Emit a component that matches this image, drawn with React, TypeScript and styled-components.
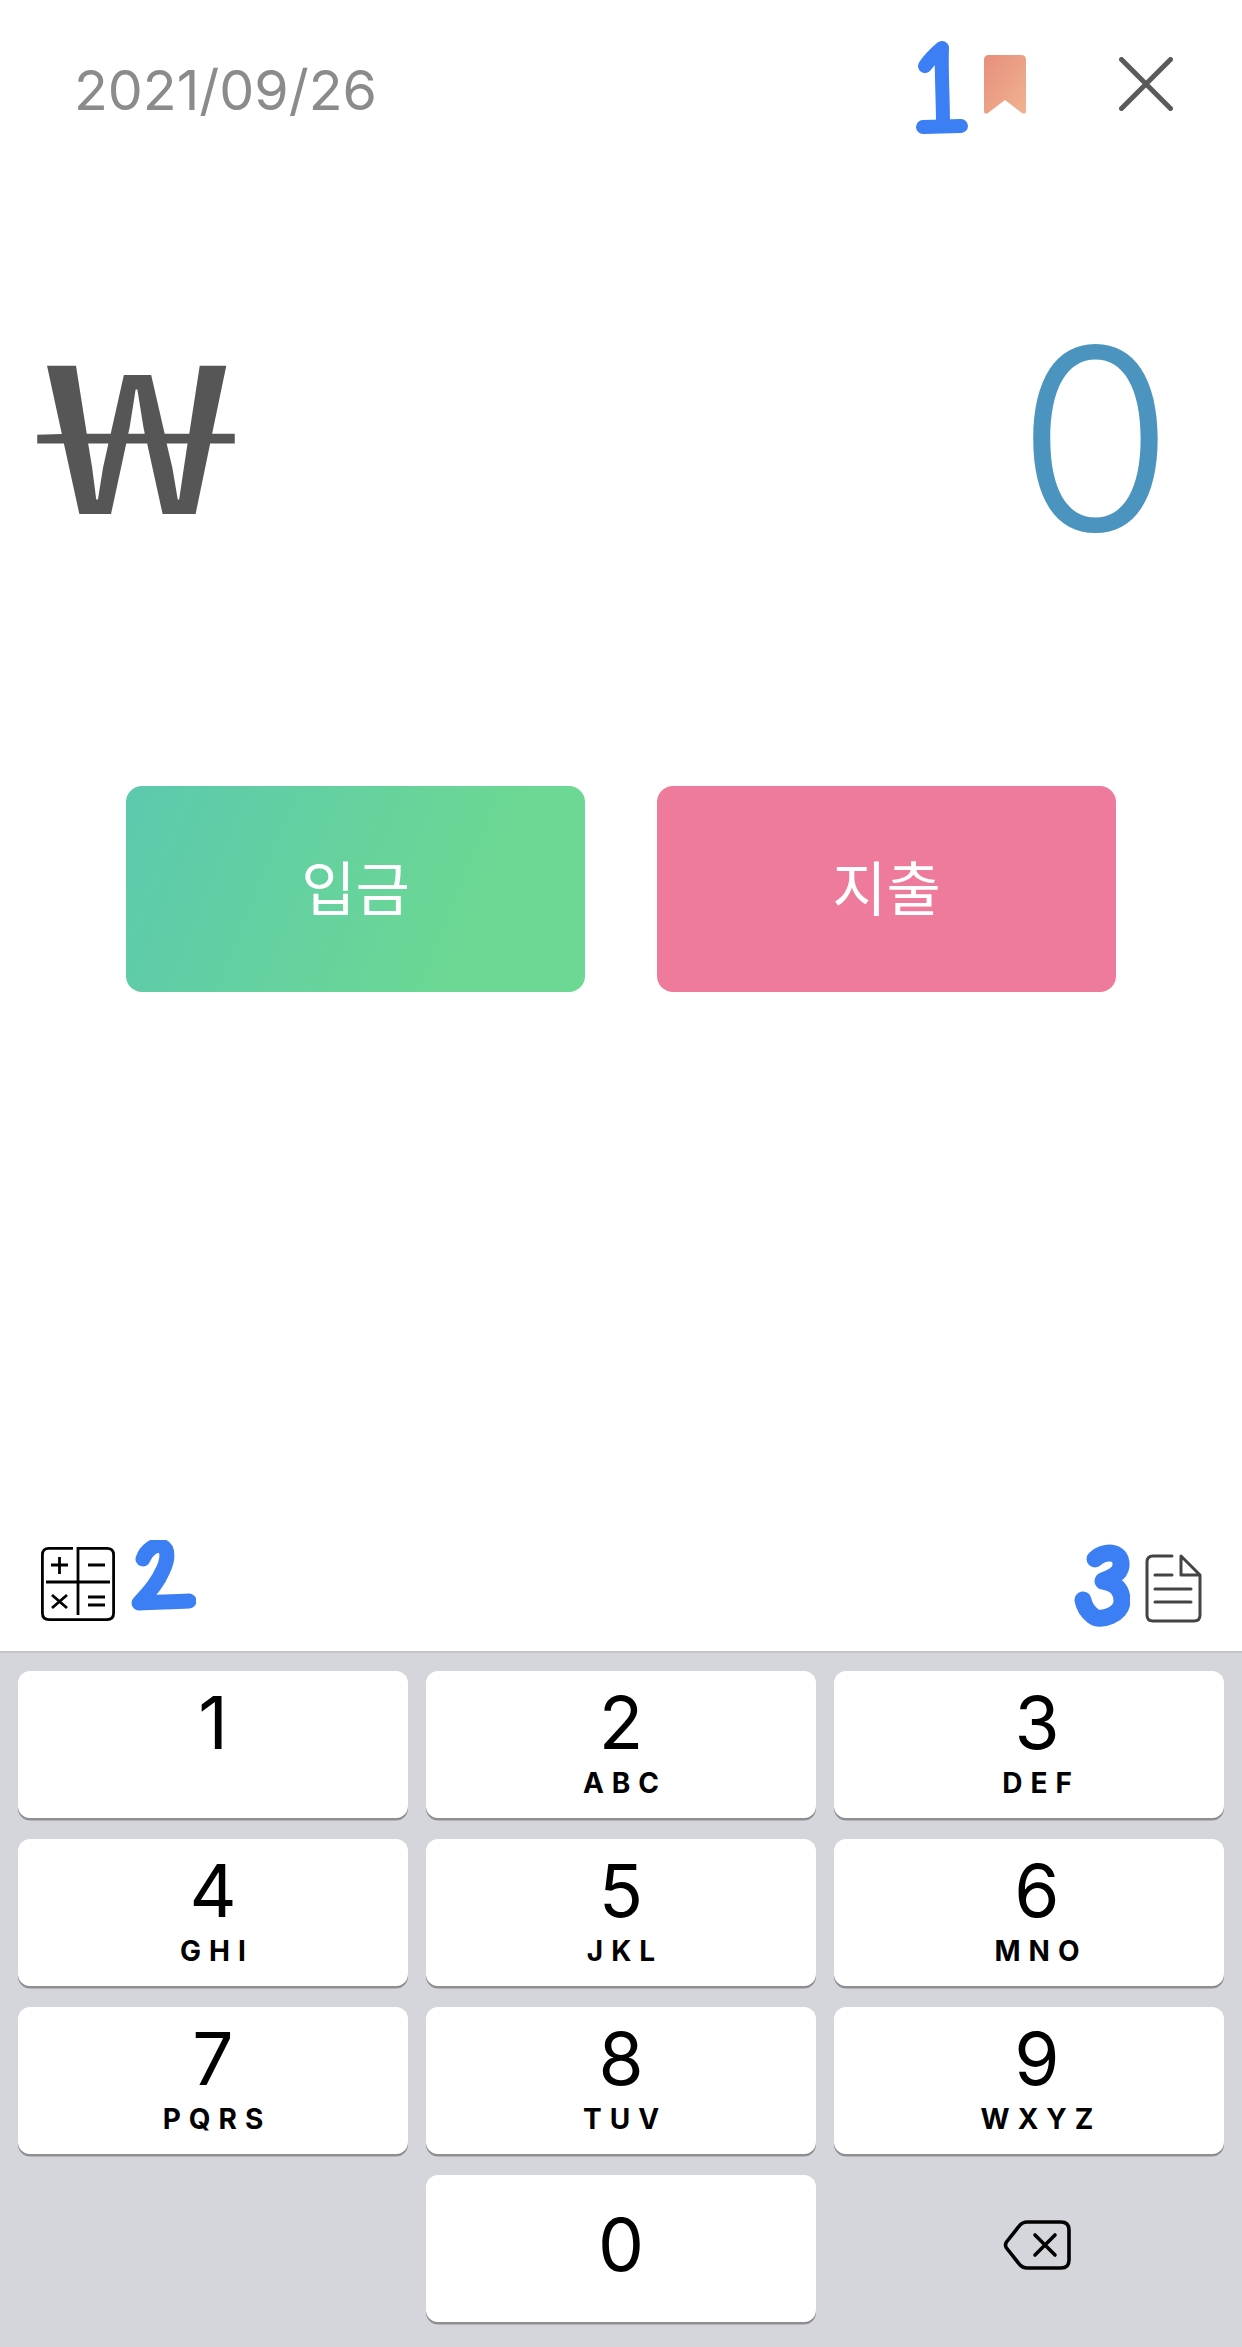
import React from "react";
import styled, { createGlobalStyle } from "styled-components";

const Global = createGlobalStyle`
  html, body { margin: 0; padding: 0; background: #fff; }
  * { box-sizing: border-box; }
  body { font-family: Inter, "Noto Sans CJK KR", sans-serif; }
`;

const Page = styled.div`
  width: 1242px;
  height: 2347px;
  display: flex;
  flex-direction: column;
  background: #fff;
  overflow: hidden;
`;

const Header = styled.header`
  height: 180px;
  padding: 0 69px 0 74px;
  display: flex;
  align-items: center;
  justify-content: space-between;
`;

const DateLabel = styled.div`
  font-size: 55.5px;
  font-weight: 400;
  line-height: 1;
  color: #8b8b8b;
`;

const HeaderActions = styled.div`
  display: flex;
  align-items: center;
`;

const Amount = styled.div`
  height: 520px;
  padding: 0 68px 0 43px;
  display: flex;
  align-items: center;
  justify-content: space-between;
`;

const Currency = styled.div`
  font-family: "Noto Sans CJK KR", sans-serif;
  font-size: 208px;
  font-weight: 400;
  line-height: 1;
  color: #565656;
  margin-bottom: 32px;
  transform: scaleX(1.62);
  transform-origin: left center;
`;

const Value = styled.div`
  font-size: 254px;
  font-weight: 300;
  line-height: 1;
  color: #4a94bf;
  margin-bottom: 3px;
`;

const ActionRow = styled.div`
  padding: 86px 126px 0;
  display: flex;
  gap: 72px;
`;

const ActionButton = styled.button<{ $bg: string }>`
  flex: 1;
  height: 206px;
  border: 0;
  padding: 0 0 8px;
  border-radius: 16px;
  background: ${(p) => p.$bg};
  color: #fff;
  font-family: "Noto Sans CJK KR", sans-serif;
  font-size: 59px;
  font-weight: 400;
`;

const Spacer = styled.div`
  flex: 1;
`;

const Toolbar = styled.div`
  height: 120px;
  padding: 0 40px 12px 41px;
  display: flex;
  align-items: center;
  justify-content: space-between;
`;

const ToolGroup = styled.div`
  display: flex;
  align-items: center;
`;

const KeyPad = styled.div`
  height: 696px;
  flex: none;
  padding: 18px 18px 0;
  background: #d5d6db;
  border-top: 2px solid #c4c5c8;
  display: grid;
  grid-template-columns: repeat(3, 390px);
  grid-auto-rows: 147px;
  column-gap: 18px;
  row-gap: 21px;
`;

const Key = styled.div<{ $shift?: number; $center?: boolean }>`
  background: #fff;
  border-radius: 12px;
  box-shadow: 0 2.5px 0 #8e8e92;
  display: flex;
  flex-direction: column;
  align-items: center;
  justify-content: ${(p) => (p.$center ? "center" : "flex-start")};
  padding-left: ${(p) => p.$shift ?? 0}px;
  padding-bottom: ${(p) => (p.$center ? 8 : 0)}px;
  color: #000;
`;

const Digit = styled.div<{ $center?: boolean }>`
  margin-top: ${(p) => (p.$center ? 0 : 15)}px;
  font-size: 73px;
  font-weight: 400;
  line-height: 74px;
`;

const Letters = styled.div`
  margin-top: 8px;
  font-size: 28px;
  font-weight: 700;
  line-height: 30px;
  letter-spacing: 8px;
  margin-right: -8px;
`;

const EmptyKey = styled.div``;

const DeleteKey = styled.div`
  display: flex;
  align-items: center;
  justify-content: center;
  padding: 0 0 8px 16px;
`;

const Scribble = styled.svg<{ $ml?: number; $mr?: number; $mt?: number }>`
  flex: none;
  display: block;
  margin-left: ${(p) => p.$ml ?? 0}px;
  margin-right: ${(p) => p.$mr ?? 0}px;
  margin-top: ${(p) => p.$mt ?? 0}px;
`;

const Icon = styled.svg<{ $ml?: number; $mr?: number; $mt?: number }>`
  flex: none;
  display: block;
  margin-left: ${(p) => p.$ml ?? 0}px;
  margin-right: ${(p) => p.$mr ?? 0}px;
  margin-top: ${(p) => p.$mt ?? 0}px;
`;

const blue = "#3c7ff5";

const keys: [string, string, number][] = [
  ["1", "", 0], ["2", "ABC", 0], ["3", "DEF", 16],
  ["4", "GHI", 0], ["5", "JKL", 0], ["6", "MNO", 16],
  ["7", "PQRS", 0], ["8", "TUV", 0], ["9", "WXYZ", 16],
];

export default function App() {
  return (
    <Page>
      <Global />
      <Header>
        <DateLabel>2021/09/26</DateLabel>
        <HeaderActions>
          <Scribble width="52" height="94" viewBox="0 0 52 94" fill="none" $mr={16} $mt={-6}>
            <path d="M9 26 C14 19 20 13 26 8 C25 30 27 55 27 86" stroke={blue} strokeWidth="14" strokeLinecap="round" strokeLinejoin="round" />
            <path d="M7 87 L45 86" stroke={blue} strokeWidth="14" strokeLinecap="round" />
          </Scribble>
          <Icon width="42" height="59" viewBox="0 0 42 59" $mr={93} $mt={-12}>
            <defs>
              <linearGradient id="bm" x1="0" y1="0" x2="1" y2="1">
                <stop offset="0" stopColor="#e78f7d" />
                <stop offset="1" stopColor="#f0b28f" />
              </linearGradient>
            </defs>
            <path d="M5 0 H37 Q42 0 42 5 V56 Q42 60 38 58 L21 45 L4 58 Q0 60 0 56 V5 Q0 0 5 0 Z" fill="url(#bm)" />
          </Icon>
          <Icon width="54" height="54" viewBox="0 0 54 54" fill="none" $mt={-12}>
            <path d="M2.5 2.5 L51.5 51.5 M51.5 2.5 L2.5 51.5" stroke="#5a5a5a" strokeWidth="5" strokeLinecap="round" />
          </Icon>
        </HeaderActions>
      </Header>

      <Amount>
        <Currency>₩</Currency>
        <Value>0</Value>
      </Amount>

      <ActionRow>
        <ActionButton $bg="linear-gradient(112deg, #5cc9ae 0%, #6cd893 75%)">입금</ActionButton>
        <ActionButton $bg="#ee7b9c">지출</ActionButton>
      </ActionRow>

      <Spacer />

      <Toolbar>
        <ToolGroup>
          <Icon width="74" height="74" viewBox="0 0 74 74" fill="none" stroke="#000" strokeWidth="2.8" $mt={-2}>
            <path d="M32 1.4 H8 Q1.4 1.4 1.4 8 V66 Q1.4 72.6 8 72.6 H66 Q72.6 72.6 72.6 66 V8 Q72.6 1.4 66 1.4 H37 V68" />
            <path d="M5 35 H69" />
            <path d="M10 18 H27 M18.5 10 V27 M47 18 H64" />
            <path d="M11 48 L26 61 M26 48 L11 61 M47 50 H64 M47 58 H64" />
          </Icon>
          <Scribble width="66" height="74" viewBox="0 0 66 74" fill="none" $ml={15} $mt={-16}>
            <path d="M13 19 C16 10 25 4 31 6 C39 8 38 20 33 30 C28 42 18 54 9 63 C24 62 40 62 59 61" stroke={blue} strokeWidth="15" strokeLinecap="round" strokeLinejoin="round" />
          </Scribble>
        </ToolGroup>
        <ToolGroup>
          <Scribble width="56" height="90" viewBox="0 0 56 90" fill="none" $mr={15}>
            <path d="M21 19 C29 11 48 9 47 26 C46 35 34 39 29 41 C42 43 48 50 48 61 C48 75 26 82 19 76 C14 72 10 66 9 60" stroke={blue} strokeWidth="17" strokeLinecap="round" strokeLinejoin="round" />
          </Scribble>
          <Icon width="57" height="69" viewBox="0 0 57 69" fill="none" stroke="#444" strokeWidth="3" strokeLinecap="round" strokeLinejoin="round" $mt={6}>
            <path d="M27 2 H8 Q2 2 2 8 V61 Q2 67 8 67 H49 Q55 67 55 61 V21 L36 2 V21 H55" />
            <path d="M10 21 H27 M10 35 H46 M10 48 H46" />
          </Icon>
        </ToolGroup>
      </Toolbar>

      <KeyPad>
        {keys.map(([d, l, s]) => (
          <Key key={d} $shift={s}>
            <Digit>{d}</Digit>
            {l && <Letters>{l}</Letters>}
          </Key>
        ))}
        <EmptyKey />
        <Key $center>
          <Digit $center>0</Digit>
        </Key>
        <DeleteKey>
          <Icon width="68" height="50" viewBox="0 0 68 50" fill="none" stroke="#000" strokeWidth="3.6" strokeLinecap="round" strokeLinejoin="round">
            <path d="M24 2 H58 Q66 2 66 10 V40 Q66 48 58 48 H24 Q20 48 17 45 L3.5 28 Q1.5 25 3.5 22 L17 5 Q20 2 24 2 Z" />
            <path d="M32 15 L52 35 M52 15 L32 35" />
          </Icon>
        </DeleteKey>
      </KeyPad>
    </Page>
  );
}
